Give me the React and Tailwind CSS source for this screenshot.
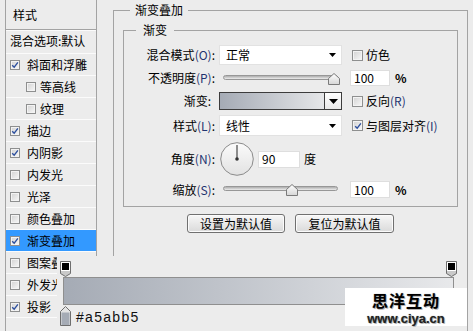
import React from "react";

const CJK = "font-['Noto_Sans_CJK_SC','Noto_Sans',sans-serif]";

function Check({ checked, small }) {
  return (
    <span
      className={`${small ? "w-[10px] h-[10px]" : "w-[11px] h-[11px]"} shrink-0 border border-[#8e8f8f] bg-gradient-to-br from-[#d2d2d2] to-[#f8f8f8] shadow-[inset_0_0_0_1px_#f3f3f3] flex items-center justify-center`}
    >
      {checked && (
        <svg viewBox="0 0 10 10" className="w-[8px] h-[8px]">
          <path d="M1.5 5.2 L4 7.8 L8.6 1.8" fill="none" stroke="#2c4f9e" strokeWidth="1.7" />
        </svg>
      )}
    </span>
  );
}

function Acc({ children }) {
  return <span className="text-[#1f3470]">{children}</span>;
}

function Label({ children, extra = "" }) {
  return <div className={`w-[91px] shrink-0 text-right whitespace-nowrap ${extra}`}>{children}</div>;
}

function DownArrow() {
  return (
    <svg width="7" height="4" viewBox="0 0 7 4">
      <polygon points="0,0 7,0 3.5,4" fill="#000" />
    </svg>
  );
}

function Select({ text, h }) {
  return (
    <div className={`ml-[4px] w-[123px] ${h} bg-white border border-[#e2e2e2] flex items-center pl-[6px] pr-[5px]`}>
      <span className="flex-1">{text}</span>
      <DownArrow />
    </div>
  );
}

function Thumb() {
  return (
    <svg width="12" height="12" viewBox="0 0 12 12">
      <defs>
        <linearGradient id="tg" x1="0" y1="0" x2="0" y2="1">
          <stop offset="0" stopColor="#ffffff" />
          <stop offset="1" stopColor="#d6d6d6" />
        </linearGradient>
      </defs>
      <polygon points="6,0.5 11.5,5.5 11.5,11.5 0.5,11.5 0.5,5.5" fill="url(#tg)" stroke="#7a7a7a" />
    </svg>
  );
}

function Slider({ thumbPos }) {
  return (
    <div className="relative ml-[4px] w-[123px] h-full">
      <div className="mt-[5px] mx-[4px] h-[5px] rounded-full border border-[#979797] bg-gradient-to-b from-[#adadad] to-[#ededed]" />
      <div className={`absolute top-[3px] ${thumbPos}`}>
        <Thumb />
      </div>
    </div>
  );
}

function Input({ value, w, h }) {
  return (
    <div className={`${w} ${h} bg-white border border-[#dedede] flex items-center pl-[3px] text-black`}>
      {value}
    </div>
  );
}

function Button({ children, w }) {
  return (
    <div
      className={`${w} h-[19px] rounded-[3px] border border-[#707070] bg-gradient-to-b from-[#f7f7f7] to-[#dadada] shadow-[inset_0_0_0_1px_#fbfbfb] flex items-center justify-center`}
    >
      {children}
    </div>
  );
}

function Dial() {
  return (
    <svg width="34" height="34" viewBox="0 0 34 34" className="ml-[5px] shrink-0">
      <defs>
        <linearGradient id="dg" x1="0" y1="0" x2="0" y2="1">
          <stop offset="0" stopColor="#fbfbfb" />
          <stop offset="1" stopColor="#e2e2e2" />
        </linearGradient>
      </defs>
      <circle cx="17" cy="17" r="16.3" fill="url(#dg)" stroke="#8a8a8a" strokeWidth="1" />
      <line x1="17" y1="17" x2="17" y2="3" stroke="#6a6a6a" strokeWidth="1.5" />
      <circle cx="17" cy="17" r="1.8" fill="#333" />
    </svg>
  );
}

const items = [
  { label: "斜面和浮雕", checked: true },
  { label: "等高线", sub: true },
  { label: "纹理", sub: true },
  { label: "描边", checked: true },
  { label: "内阴影", checked: true },
  { label: "内发光" },
  { label: "光泽" },
  { label: "颜色叠加" },
  { label: "渐变叠加", checked: true, active: true },
  { label: "图案叠加" },
  { label: "外发光" },
  { label: "投影", checked: true },
];

function TopStop() {
  return (
    <svg width="11" height="16" viewBox="0 0 11 16">
      <path d="M0.5 0.5 H10.5 V12.5 L5.5 15.5 L0.5 12.5 Z" fill="#c9c9c9" stroke="#6e6e6e" />
      <rect x="1" y="1" width="9" height="9" fill="#fff" />
      <rect x="2" y="2" width="7" height="7" fill="#000" />
    </svg>
  );
}

function BottomStop() {
  return (
    <svg width="11" height="20" viewBox="0 0 11 20">
      <path d="M5.5 0.5 L10.5 5.5 V19.5 H0.5 V5.5 Z" fill="#e4e4e4" stroke="#6e6e6e" />
      <rect x="1.5" y="6.5" width="8" height="12.5" fill="#a5abb5" />
    </svg>
  );
}

export default function App() {
  return (
    <div className={`relative w-[473px] h-[331px] overflow-hidden bg-[#ececec] text-black text-[12px] leading-[14px] flex ${CJK}`}>
      {/* Left style list */}
      <div className="ml-[5px] w-[92px] h-full shrink-0 border-x border-[#a3a3a3] flex flex-col">
        <div className="h-[30px] border-b border-[#a3a3a3] flex items-center pl-[7px]">样式</div>
        <div className="h-px bg-[#fbfbfb]" />
        <div className="h-[23px] border-b border-[#fbfbfb] flex items-center pl-[4px] pb-[3px] whitespace-nowrap overflow-hidden">
          混合选项:默认
        </div>
        {items.map((it) => (
          <div
            key={it.label}
            className={`h-[22px] border-b border-[#fbfbfb] flex items-center whitespace-nowrap ${
              it.sub ? "pl-[20px] gap-[4px]" : "pl-[4px] gap-[7px]"
            } ${it.active ? "bg-[#3399ff]" : ""}`}
          >
            <Check small checked={it.checked} />
            <span>{it.label}</span>
          </div>
        ))}
      </div>

      {/* Gradient overlay group */}
      <fieldset className="ml-[16px] mt-[3px] w-[355px] h-[345px] shrink-0 border border-[#a3a3a3]">
        <legend className="ml-[16px] px-[5px] leading-[14px]">渐变叠加</legend>

        <fieldset className="mx-[9px] mt-[6px] border border-[#a3a3a3] pb-[8px]">
          <legend className="ml-[12px] px-[7px] leading-[14px]">渐变</legend>

          <div className="mt-[8px] h-[20px] flex items-center">
            <Label>
              混合模式<Acc>(O)</Acc>:
            </Label>
            <Select text="正常" h="h-[20px]" />
            <div className="ml-[10px] flex items-center gap-[3px]">
              <Check />
              <span>仿色</span>
            </div>
          </div>

          <div className="mt-[5px] h-[16px] flex items-center">
            <Label>
              不透明度<Acc>(P)</Acc>:
            </Label>
            <Slider thumbPos="left-[109px]" />
            <div className="ml-[8px]">
              <Input value="100" w="w-[40px]" h="h-[16px]" />
            </div>
            <span className="ml-[5px] font-bold">%</span>
          </div>

          <div className="mt-[6px] h-[18px] flex items-center">
            <Label extra="pr-[4px]">渐变:</Label>
            <div className="ml-[4px] w-[123px] h-[18px] flex border border-[#3c3c3c]">
              <div className="flex-1 bg-gradient-to-r from-[#a5abb5] to-[#e6e7e9] border-r border-[#3c3c3c]" />
              <div className="w-[16px] bg-gradient-to-b from-white to-[#e9e9e9] flex items-center justify-center">
                <svg width="9" height="5" viewBox="0 0 9 5">
                  <polygon points="0,0 9,0 4.5,5" fill="#000" />
                </svg>
              </div>
            </div>
            <div className="ml-[10px] flex items-center gap-[3px]">
              <Check />
              <span>
                反向<Acc>(R)</Acc>
              </span>
            </div>
          </div>

          <div className="mt-[5px] h-[21px] flex items-center">
            <Label>
              样式<Acc>(L)</Acc>:
            </Label>
            <Select text="线性" h="h-[21px]" />
            <div className="ml-[10px] flex items-center gap-[3px]">
              <Check checked />
              <span>
                与图层对齐<Acc>(I)</Acc>
              </span>
            </div>
          </div>

          <div className="mt-[6px] h-[34px] flex items-center">
            <Label>
              角度<Acc>(N)</Acc>:
            </Label>
            <Dial />
            <div className="ml-[4px]">
              <Input value="90" w="w-[42px]" h="h-[17px]" />
            </div>
            <span className="ml-[4px]">度</span>
          </div>

          <div className="mt-[5px] h-[17px] flex items-center">
            <Label>
              缩放<Acc>(S)</Acc>:
            </Label>
            <Slider thumbPos="left-[67px]" />
            <div className="ml-[8px]">
              <Input value="100" w="w-[40px]" h="h-[17px]" />
            </div>
            <span className="ml-[5px] font-bold">%</span>
          </div>
        </fieldset>

        <div className="mt-[7px] ml-[73px] flex gap-[10px]">
          <Button w="w-[98px]">设置为默认值</Button>
          <Button w="w-[99px]">复位为默认值</Button>
        </div>
      </fieldset>

      {/* Gradient editor strip overlaying the dialog */}
      <div className="absolute left-[57px] top-[256px] w-[405px] h-[75px] bg-[#ececec] pl-[3px] flex flex-col">
        <div className="mt-[5px] w-[397px] flex justify-between">
          <TopStop />
          <TopStop />
        </div>
        <div className="ml-[3px] w-[391px] h-[28px] border border-[#8f8f8f] bg-gradient-to-r from-[#a5abb5] to-[#e8e9eb]" />
        <div className="mt-[1px] flex items-center">
          <BottomStop />
          <span className="ml-[5px] mt-[2px] font-['Liberation_Sans',Arial,sans-serif] text-[14px] tracking-[1.3px] text-[#111]">
            #a5abb5
          </span>
        </div>
      </div>

      {/* Watermark */}
      <div className="absolute left-[345px] top-[288px] w-[122px] h-[38px] bg-white flex flex-col items-center pt-[1px]">
        <div className="text-[16px] leading-[22px] tracking-[1px] font-bold [text-shadow:0_0_1px_#888,1px_1px_0_#bbb]">
          思洋互动
        </div>
        <div className="font-['Liberation_Sans',Arial,sans-serif] text-[13px] leading-[15px] font-bold text-[#222] [text-shadow:0_0_1px_#777,1px_1px_0_#bbb]">
          www.ciya.cn
        </div>
      </div>
    </div>
  );
}
